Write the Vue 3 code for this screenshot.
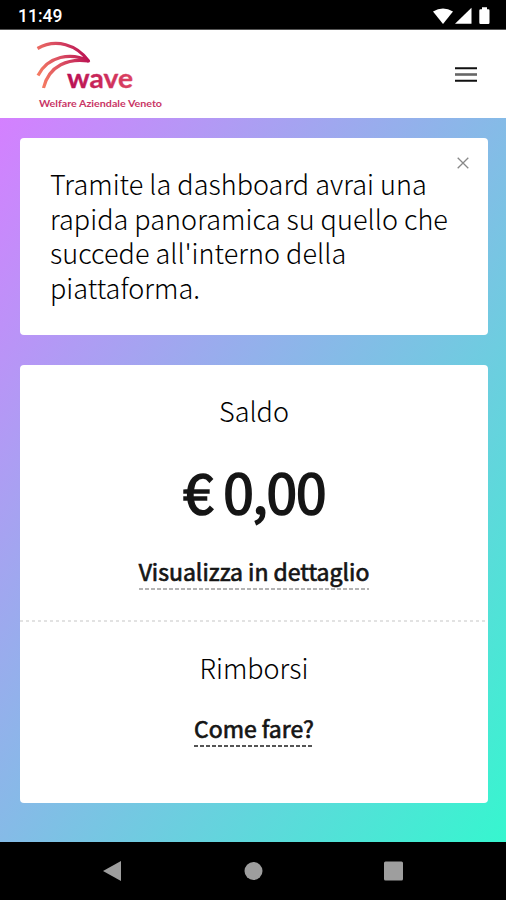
<script setup>
const introLines = [
  'Tramite la dashboard avrai una',
  'rapida panoramica su quello che',
  "succede all'interno della",
  'piattaforma.',
]
</script>

<template>
  <div class="screen">
    <div class="status">
      <span class="clock">11:49</span>
      <svg class="signals" width="60" height="20" viewBox="0 0 60 20">
        <path d="M2.500 4.800Q12.500-1 22.500 4.800L12.500 17.500Z" transform="translate(-.5 .6)" />
        <path d="M24.500 17.800L41 1.800V17.800Z" transform="translate(-.5 0)" />
        <path d="M49 3.200H51.500V1.200H56.500V3.200H58Q59 3.200 59 4.500V16.500Q59 18 57.800 18H50Q48.800 18 48.800 16.500V4.500Q48.800 3.200 50 3.200Z" transform="translate(-.5 0)" />
      </svg>
    </div>
    <header class="header">
      <svg class="logo" width="130" height="74" viewBox="0 0 130 74">
        <defs>
          <linearGradient id="arc" gradientUnits="userSpaceOnUse" x1="4" y1="40" x2="54" y2="20">
            <stop offset="0" stop-color="#f47a62" />
            <stop offset=".5" stop-color="#d94c62" />
            <stop offset="1" stop-color="#b90f52" />
          </linearGradient>
          <linearGradient id="word" x1="0" x2="1" y1="0" y2="0">
            <stop offset="0" stop-color="#b80f54" />
            <stop offset="1" stop-color="#dc4461" />
          </linearGradient>
        </defs>
        <g fill="none" stroke="url(#arc)" stroke-width="3.200" stroke-linejoin="round">
          <path d="M2.500 13.500C21 3 42 10 53.500 26C36 17 13 21 3 40.500" />
          <path d="M53.500 26C34 23 14 30 8.500 53" />
        </g>
        <text class="word" x="32" y="53.200" textLength="66" lengthAdjust="spacingAndGlyphs">wave</text>
        <text class="tagline" x="4" y="71.500" textLength="123" lengthAdjust="spacingAndGlyphs">Welfare Aziendale Veneto</text>
      </svg>
      <svg class="menu" width="24" height="18" viewBox="0 0 24 18">
        <path d="M1 2.200H23M1 14.800H23" stroke="#111" stroke-width="2.100" />
        <path d="M1 8.500H23" stroke="#666" stroke-width="2.600" />
      </svg>
    </header>
    <main class="content">
      <section class="card intro">
        <svg class="close" width="14" height="14" viewBox="0 0 14 14">
          <path d="M1.700 1.700L12.300 12.300M12.300 1.700L1.700 12.300" stroke="#888" stroke-width="1.300" />
        </svg>
        <p><span v-for="line in introLines" :key="line" class="line">{{ line }}</span></p>
      </section>
      <section class="card summary">
        <div class="balance">
          <h2>Saldo</h2>
          <strong class="amount">€ 0,00</strong>
          <a class="link soft">Visualizza in dettaglio</a>
        </div>
        <div class="divider"></div>
        <div class="refunds">
          <h2>Rimborsi</h2>
          <a class="link how">Come fare?</a>
        </div>
      </section>
    </main>
    <nav class="nav">
      <svg width="20" height="22" viewBox="0 0 20 22"><path d="M1 11L19 1V21Z" /></svg>
      <svg width="20" height="22" viewBox="0 0 20 22"><circle cx="10.500" cy="11" r="9" /></svg>
      <svg width="20" height="22" viewBox="0 0 20 22"><rect x="0" y="1.500" width="19" height="19" rx="1.500" /></svg>
    </nav>
  </div>
</template>

<style>
body { margin: 0; }
</style>

<style scoped>
.screen {
  width: 506px;
  height: 900px;
  display: flex;
  flex-direction: column;
  font-family: "Noto Sans CJK SC", "Noto Sans", sans-serif;
  color: #151515;
  overflow: hidden;
}
.status {
  box-sizing: border-box;
  height: 30px;
  background: #000;
  border-bottom: 1px solid #555;
  display: flex;
  justify-content: space-between;
  padding: 6px 15px 0 18px;
}
.clock {
  font: 500 17.500px/20px Roboto, sans-serif;
  color: #fff;
}
.signals { fill: #fff; }
.header {
  box-sizing: border-box;
  height: 88px;
  background: #fff;
  display: flex;
  justify-content: space-between;
  padding: 5px 28px 0 35px;
}
.word { font: 700 27px Lato, sans-serif; fill: url(#word); stroke: url(#word); stroke-width: .3px; }
.tagline { font: 700 9.500px Lato, sans-serif; fill: #c93565; }
.menu { margin-top: 31px; }
.content {
  box-sizing: border-box;
  height: 724px;
  padding: 20px 18px 0 20px;
  background: linear-gradient(to bottom right, #d480ff, #36f6cf);
}
.card {
  background: #fff;
  border-radius: 4px;
  box-sizing: border-box;
}
.intro {
  position: relative;
  height: 197px;
  padding: 29px 30px 0;
}
.close {
  position: absolute;
  top: 18px;
  right: 18px;
}
p { margin: 0; font-size: 27px; font-weight: 300; line-height: 34.500px; letter-spacing: .03px; color: #000; }
.line { display: block; white-space: nowrap; }
.summary {
  margin-top: 30px;
  height: 438px;
}
.balance, .refunds {
  box-sizing: border-box;
  display: flex;
  flex-direction: column;
  align-items: center;
  white-space: nowrap;
}
.balance {
  height: 255px;
  padding-top: 26px;
}
.divider {
  height: 2px;
  background: repeating-linear-gradient(90deg, #e2e2e2 0 3px, transparent 3px 6px);
}
.refunds { padding-top: 26px; }
h2 { margin: 0; font-size: 27px; font-weight: 300; line-height: 40px; color: #000; }
.amount {
  font-size: 55px;
  font-weight: 400;
  line-height: 70px;
  margin-top: 24px;
  letter-spacing: -1.200px;
  -webkit-text-stroke: 1.700px #151515;
}
.link {
  font-size: 23px;
  font-weight: 400;
  line-height: 31px;
  padding-bottom: 3px;
  -webkit-text-stroke: .7px #151515;
  background: repeating-linear-gradient(90deg, #555 0 4px, transparent 4px 6px) left bottom / 100% 2px no-repeat;
}
.soft {
  margin-top: 31px;
  background-image: repeating-linear-gradient(90deg, #b4b4b4 0 4px, transparent 4px 6px);
}
.how { margin-top: 25px; }
.nav {
  height: 58px;
  background: #000;
  display: flex;
  justify-content: space-between;
  align-items: center;
  padding: 0 102px;
  fill: #9e9e9e;
}
</style>
